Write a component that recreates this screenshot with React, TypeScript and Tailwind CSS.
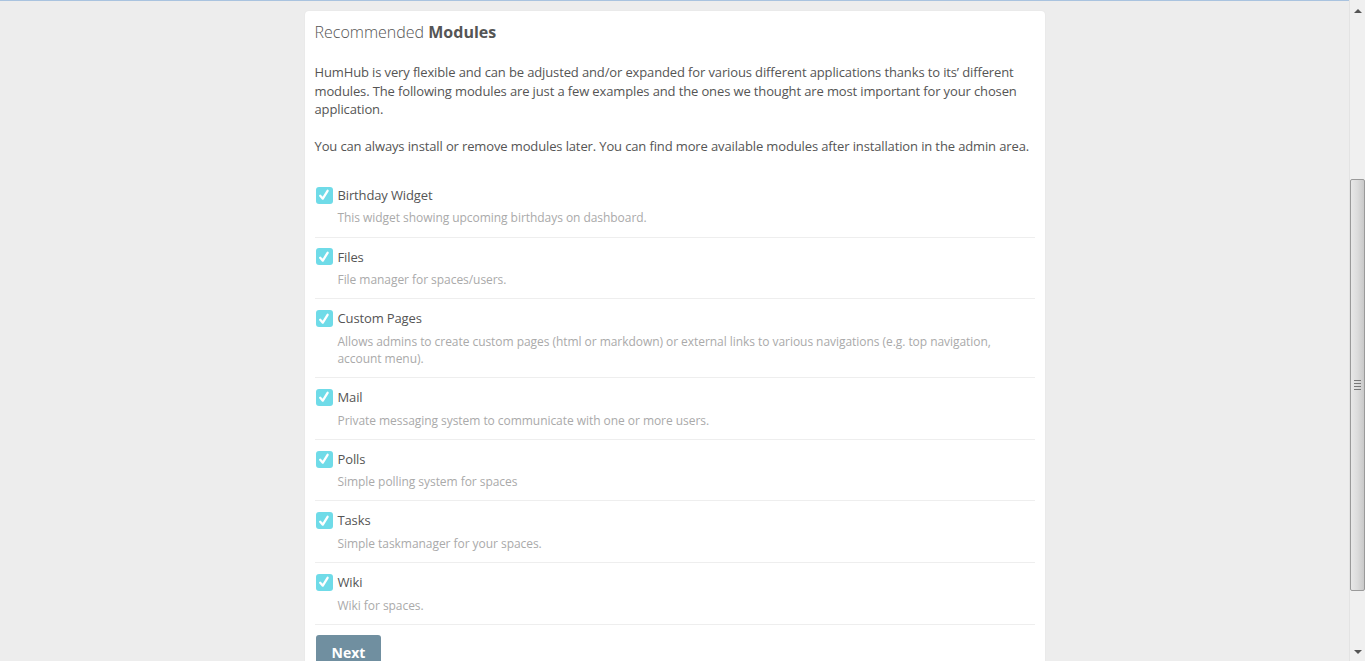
const MODULES = [
  { name: "Birthday Widget", description: "This widget showing upcoming birthdays on dashboard." },
  { name: "Files", description: "File manager for spaces/users." },
  {
    name: "Custom Pages",
    description:
      "Allows admins to create custom pages (html or markdown) or external links to various navigations (e.g. top navigation, account menu).",
  },
  { name: "Mail", description: "Private messaging system to communicate with one or more users." },
  { name: "Polls", description: "Simple polling system for spaces" },
  { name: "Tasks", description: "Simple taskmanager for your spaces." },
  { name: "Wiki", description: "Wiki for spaces." },
];

function CheckBox() {
  return (
    <span className="flex size-[17px] flex-none items-center justify-center rounded-[3px] bg-[#6fdbe8]">
      <svg viewBox="0 0 12 12" className="size-[12px]" aria-hidden="true">
        <path d="M2.2 6.8 L4.8 9.6 L9.6 1.8" fill="none" stroke="white" strokeWidth={2.3} strokeLinecap="round" strokeLinejoin="round" />
      </svg>
    </span>
  );
}

function ScrollBar() {
  return (
    <div className="flex h-full w-[16px] flex-none flex-col border-l border-[#e3e3e3] bg-[#f0f0f0]">
      <div className="flex h-[17px] items-center justify-center pt-[4px]">
        <span className="h-0 w-0 border-x-[4px] border-b-[4px] border-x-transparent border-b-[#555]" />
      </div>
      <div className="h-[162px]" />
      <div className="flex h-[412px] items-center justify-center rounded-[2px] border border-[#9a9a9a] bg-gradient-to-r from-[#e8e8e8] via-[#dcdcdc] to-[#c9c9c9]">
        <div className="flex flex-col gap-[2px]">
          <span className="h-px w-[7px] bg-[#777]" />
          <span className="h-px w-[7px] bg-[#777]" />
          <span className="h-px w-[7px] bg-[#777]" />
          <span className="h-px w-[7px] bg-[#777]" />
        </div>
      </div>
      <div className="flex-1" />
      <div className="flex h-[17px] items-center justify-center pb-[2px]">
        <span className="h-0 w-0 border-x-[4px] border-t-[4px] border-x-transparent border-t-[#555]" />
      </div>
    </div>
  );
}

export default function App() {
  return (
    <div className="flex h-[661px] w-full overflow-hidden bg-[#ededed] font-['Open_Sans',sans-serif] text-[13px] leading-[1.42857] tracking-[-0.13px] text-[#555]">
      <div className="flex min-w-0 flex-1 flex-col">
        <div className="h-px flex-none bg-[#a9c3df]" />
        <div className="relative mx-auto mt-[10px] w-[740px] flex-none rounded-[4px] bg-white shadow-[0_0_2px_rgba(0,0,0,0.06)]">
          <div className="px-[10px] pt-[10px] pb-[10px] text-[16px] leading-[22px] font-light tracking-normal text-[#555]">
            Recommended <strong className="font-bold">Modules</strong>
          </div>
          <div className="px-[10px] pt-[10px]">
            <p className="mb-[20px]">
              HumHub is very flexible and can be adjusted and/or expanded for various different applications thanks to its’
              different modules. The following modules are just a few examples and the ones we thought are most important for
              your chosen application.
              <br />
              <br />
              You can always install or remove modules later. You can find more available modules after installation in the
              admin area.
            </p>

            <div>
              {MODULES.map((m) => (
                <div key={m.name} className="border-b border-[#eee] pt-[10px] pb-[10px]">
                  <div className="flex items-center gap-[5px] pl-px">
                    <CheckBox />
                    <span className="text-[#555]">{m.name}</span>
                  </div>
                  <p className="mt-[5px] pr-[20px] pl-[23px] text-[12px] tracking-[-0.05px] text-[#aaa]">{m.description}</p>
                </div>
              ))}
            </div>

            <button className="mt-[10px] ml-px rounded-[3px] bg-[#708fa0] px-[16px] py-[8px] text-[14px] leading-[20px] font-bold tracking-normal text-white">
              Next
            </button>
          </div>
        </div>
      </div>
      <ScrollBar />
    </div>
  );
}
